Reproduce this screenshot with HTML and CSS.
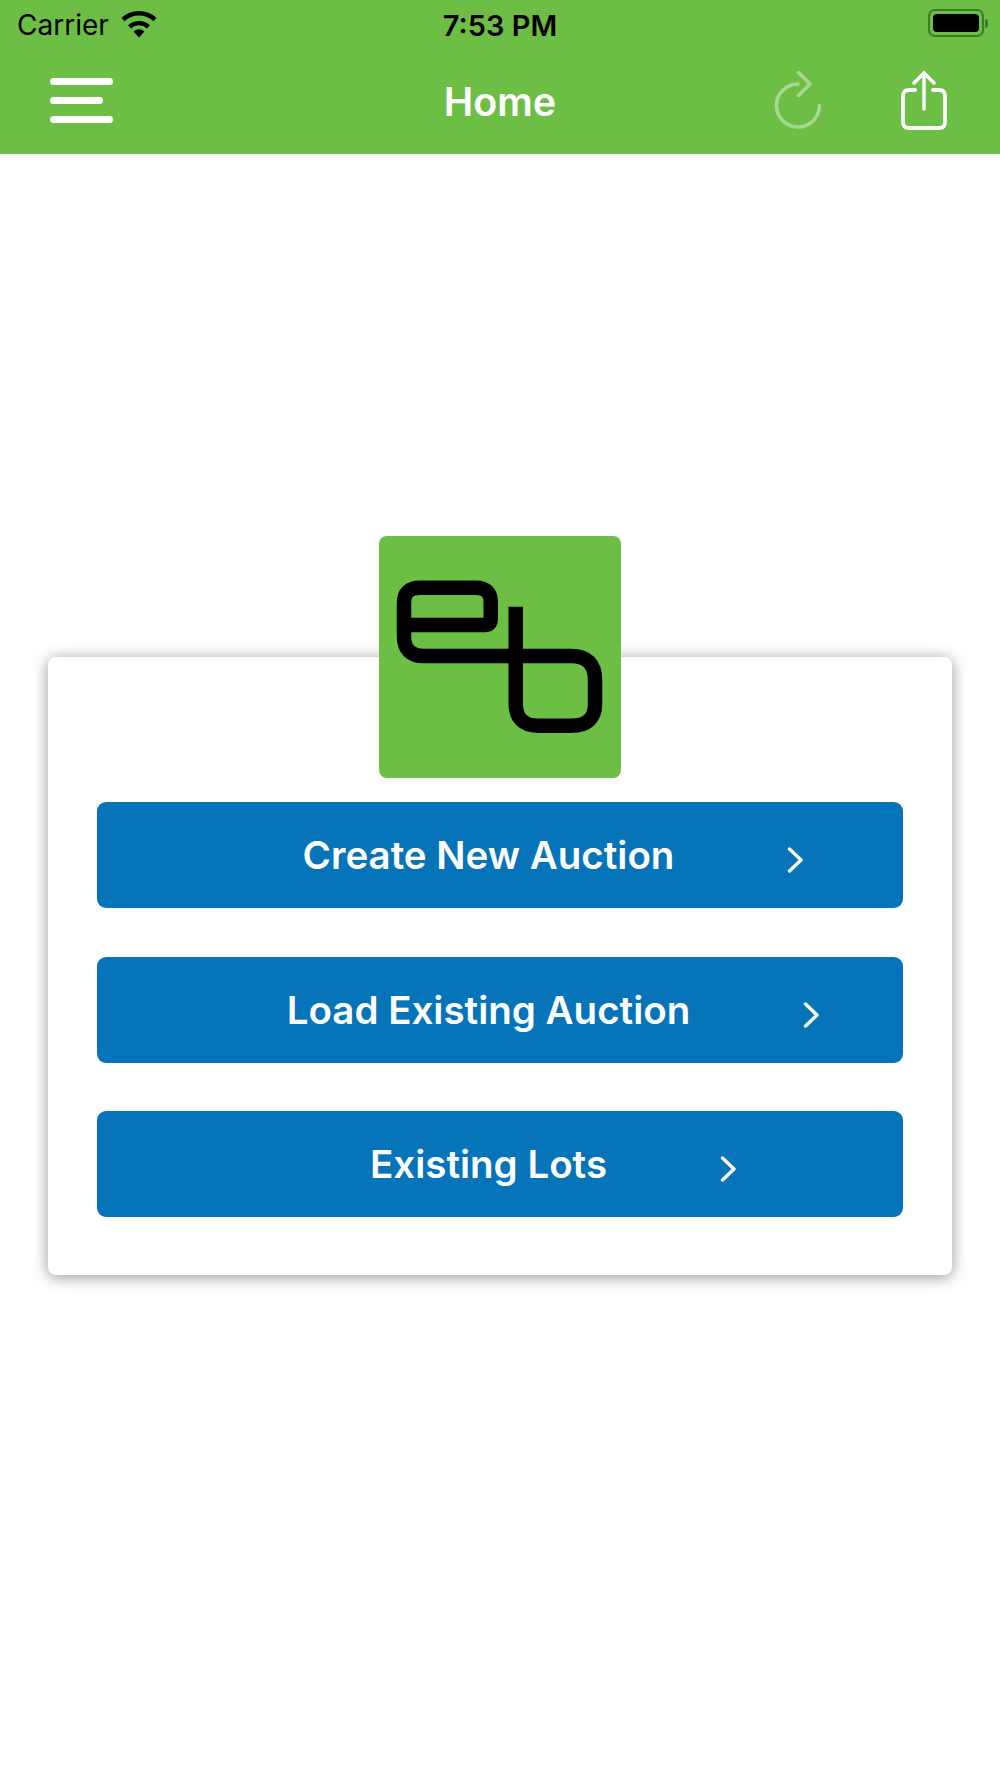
FILE: index.html
```html
<!DOCTYPE html>
<html lang="en">
<head>
  <meta charset="UTF-8">
  <meta name="viewport" content="width=device-width, initial-scale=1.0">
  <title>Home</title>
  <link rel="stylesheet" href="styles.css">
</head>
<body>
  <header class="topbar">
    <div class="status-bar">
      <div class="status-left">
        <span class="carrier">Carrier</span>
        <svg class="wifi" viewBox="0 0 38 27" width="38" height="27">
          <path d="M19 26.5 L13.6 20.4 A8 8 0 0 1 24.4 20.4 Z" fill="#000"/>
          <path d="M9.6 15.8 A14 14 0 0 1 28.4 15.8" fill="none" stroke="#000" stroke-width="4.4"/>
          <path d="M3 8.6 A23.5 23.5 0 0 1 35 8.6" fill="none" stroke="#000" stroke-width="4.4"/>
        </svg>
      </div>
      <span class="clock">7:53 PM</span>
      <div class="battery">
        <div class="battery-body"><div class="battery-level"></div></div>
        <div class="battery-tip"></div>
      </div>
    </div>
    <nav class="navbar">
      <div class="menu-icon">
        <span></span>
        <span class="short"></span>
        <span></span>
      </div>
      <h1>Home</h1>
      <div class="nav-actions">
        <svg class="refresh" viewBox="0 0 50 58" width="50" height="58">
          <path d="M25 13 A21.5 21.5 0 1 0 46.5 34.5" fill="none" stroke="#fff" stroke-width="3.6" stroke-linecap="round"/>
          <path d="M25.5 1.5 L37 13 L25.5 24.5" fill="none" stroke="#fff" stroke-width="3.6" stroke-linecap="round" stroke-linejoin="round"/>
        </svg>
        <svg class="share" viewBox="0 0 48 60" width="48" height="60">
          <path d="M15 20 H9 Q3 20 3 26 V52 Q3 58 9 58 H39 Q45 58 45 52 V26 Q45 20 39 20 H33" fill="none" stroke="#fff" stroke-width="3.8" stroke-linecap="round"/>
          <path d="M24 39 V3" fill="none" stroke="#fff" stroke-width="3.4" stroke-linecap="round"/>
          <path d="M14 13 L24 3 L34 13" fill="none" stroke="#fff" stroke-width="3.6" stroke-linecap="round" stroke-linejoin="round"/>
        </svg>
      </div>
    </nav>
  </header>

  <main class="content">
    <div class="card">
      <div class="logo">
        <svg viewBox="0 0 242 242" width="242" height="242">
          <path d="M25 89 H106 Q111.7 89 111.7 83 V66 Q111.7 51.7 97 51.7 H41 Q25 51.7 25 67 V100 Q25 120 45 120 H192 Q216 120 216 144 V168 Q216 189.7 192 189.7 H159 Q136.7 189.7 136.7 167 V70.7" fill="none" stroke="#000" stroke-width="14.5" stroke-linejoin="round"/>
        </svg>
      </div>
      <button class="action-btn">
        <span>Create New Auction</span>
        <svg class="chevron" viewBox="0 0 17 26" width="17" height="26"><path d="M2.5 2 L14 13 L2.5 24" fill="none" stroke="#fff" stroke-width="3.4" stroke-linecap="round" stroke-linejoin="round"/></svg>
      </button>
      <button class="action-btn">
        <span>Load Existing Auction</span>
        <svg class="chevron" viewBox="0 0 17 26" width="17" height="26"><path d="M2.5 2 L14 13 L2.5 24" fill="none" stroke="#fff" stroke-width="3.4" stroke-linecap="round" stroke-linejoin="round"/></svg>
      </button>
      <button class="action-btn">
        <span>Existing Lots</span>
        <svg class="chevron" viewBox="0 0 17 26" width="17" height="26"><path d="M2.5 2 L14 13 L2.5 24" fill="none" stroke="#fff" stroke-width="3.4" stroke-linecap="round" stroke-linejoin="round"/></svg>
      </button>
    </div>
  </main>
</body>
</html>
```

FILE: styles.css
```css
* {
    margin: 0;
    padding: 0;
    box-sizing: border-box;
}

body {
    background: #FFFFFF;
    font-family: 'Inter', sans-serif;
    height: 1778px;
    overflow: hidden;
}

.topbar {
    background: #6CBE45;
    height: 154px;
}

.status-bar {
    height: 50px;
    padding: 0 17px;
    display: grid;
    grid-template-columns: 1fr auto 1fr;
    align-items: center;
    color: #000;
}

.status-left {
    display: flex;
    align-items: center;
    gap: 11px;
}

.carrier {
    font-size: 28px;
}

.clock {
    font-size: 29px;
    font-weight: 600;
}

.wifi {
    margin-top: -2px;
}

.battery {
    justify-self: end;
    display: flex;
    align-items: center;
    margin-top: -4px;
    margin-right: -5px;
}

.battery-body {
    width: 56px;
    height: 28px;
    padding: 3px;
    border: 2px solid #3F7A2B;
    border-radius: 7px;
}

.battery-level {
    width: 100%;
    height: 100%;
    background: #000;
    border-radius: 4px;
}

.battery-tip {
    width: 3px;
    height: 9px;
    background: #3F7A2B;
    border-radius: 0 3px 3px 0;
    margin-left: 1px;
}

.navbar {
    height: 104px;
    padding: 0 50px;
    display: grid;
    grid-template-columns: 1fr auto 1fr;
    align-items: center;
}

.navbar h1 {
    color: #FFF;
    font-size: 39.5px;
    font-weight: 600;
    margin-top: -1px;
}

.menu-icon {
    display: flex;
    flex-direction: column;
    gap: 12px;
    width: 63px;
    margin-bottom: 4px;
}

.menu-icon span {
    height: 7px;
    background: #FFF;
    border-radius: 4px;
}

.menu-icon .short {
    width: 53px;
}

.nav-actions {
    justify-self: end;
    display: flex;
    align-items: center;
    gap: 77px;
    margin-right: 2px;
    margin-bottom: 5px;
}

.refresh {
    opacity: 0.4;
}

.content {
    padding: 503px 48px 0;
}

.card {
    background: #FFF;
    height: 618px;
    padding: 0 49px;
    border-radius: 8px;
    box-shadow: 0 2px 16px rgba(0, 0, 0, 0.42);
    display: flex;
    flex-direction: column;
    gap: 48.5px;
}

.logo {
    width: 242px;
    height: 242px;
    margin: -121px auto -24.5px;
    background: #6CBE45;
    border-radius: 8px;
}

.logo svg {
    display: block;
}

.action-btn {
    height: 106px;
    padding-left: 107px;
    border: none;
    border-radius: 9px;
    background: #0574B9;
    color: #FFF;
    font-family: inherit;
    font-size: 38.5px;
    font-weight: 600;
    display: flex;
    align-items: center;
    justify-content: center;
    gap: 113px;
}

.chevron {
    margin-top: 10px;
}
```
